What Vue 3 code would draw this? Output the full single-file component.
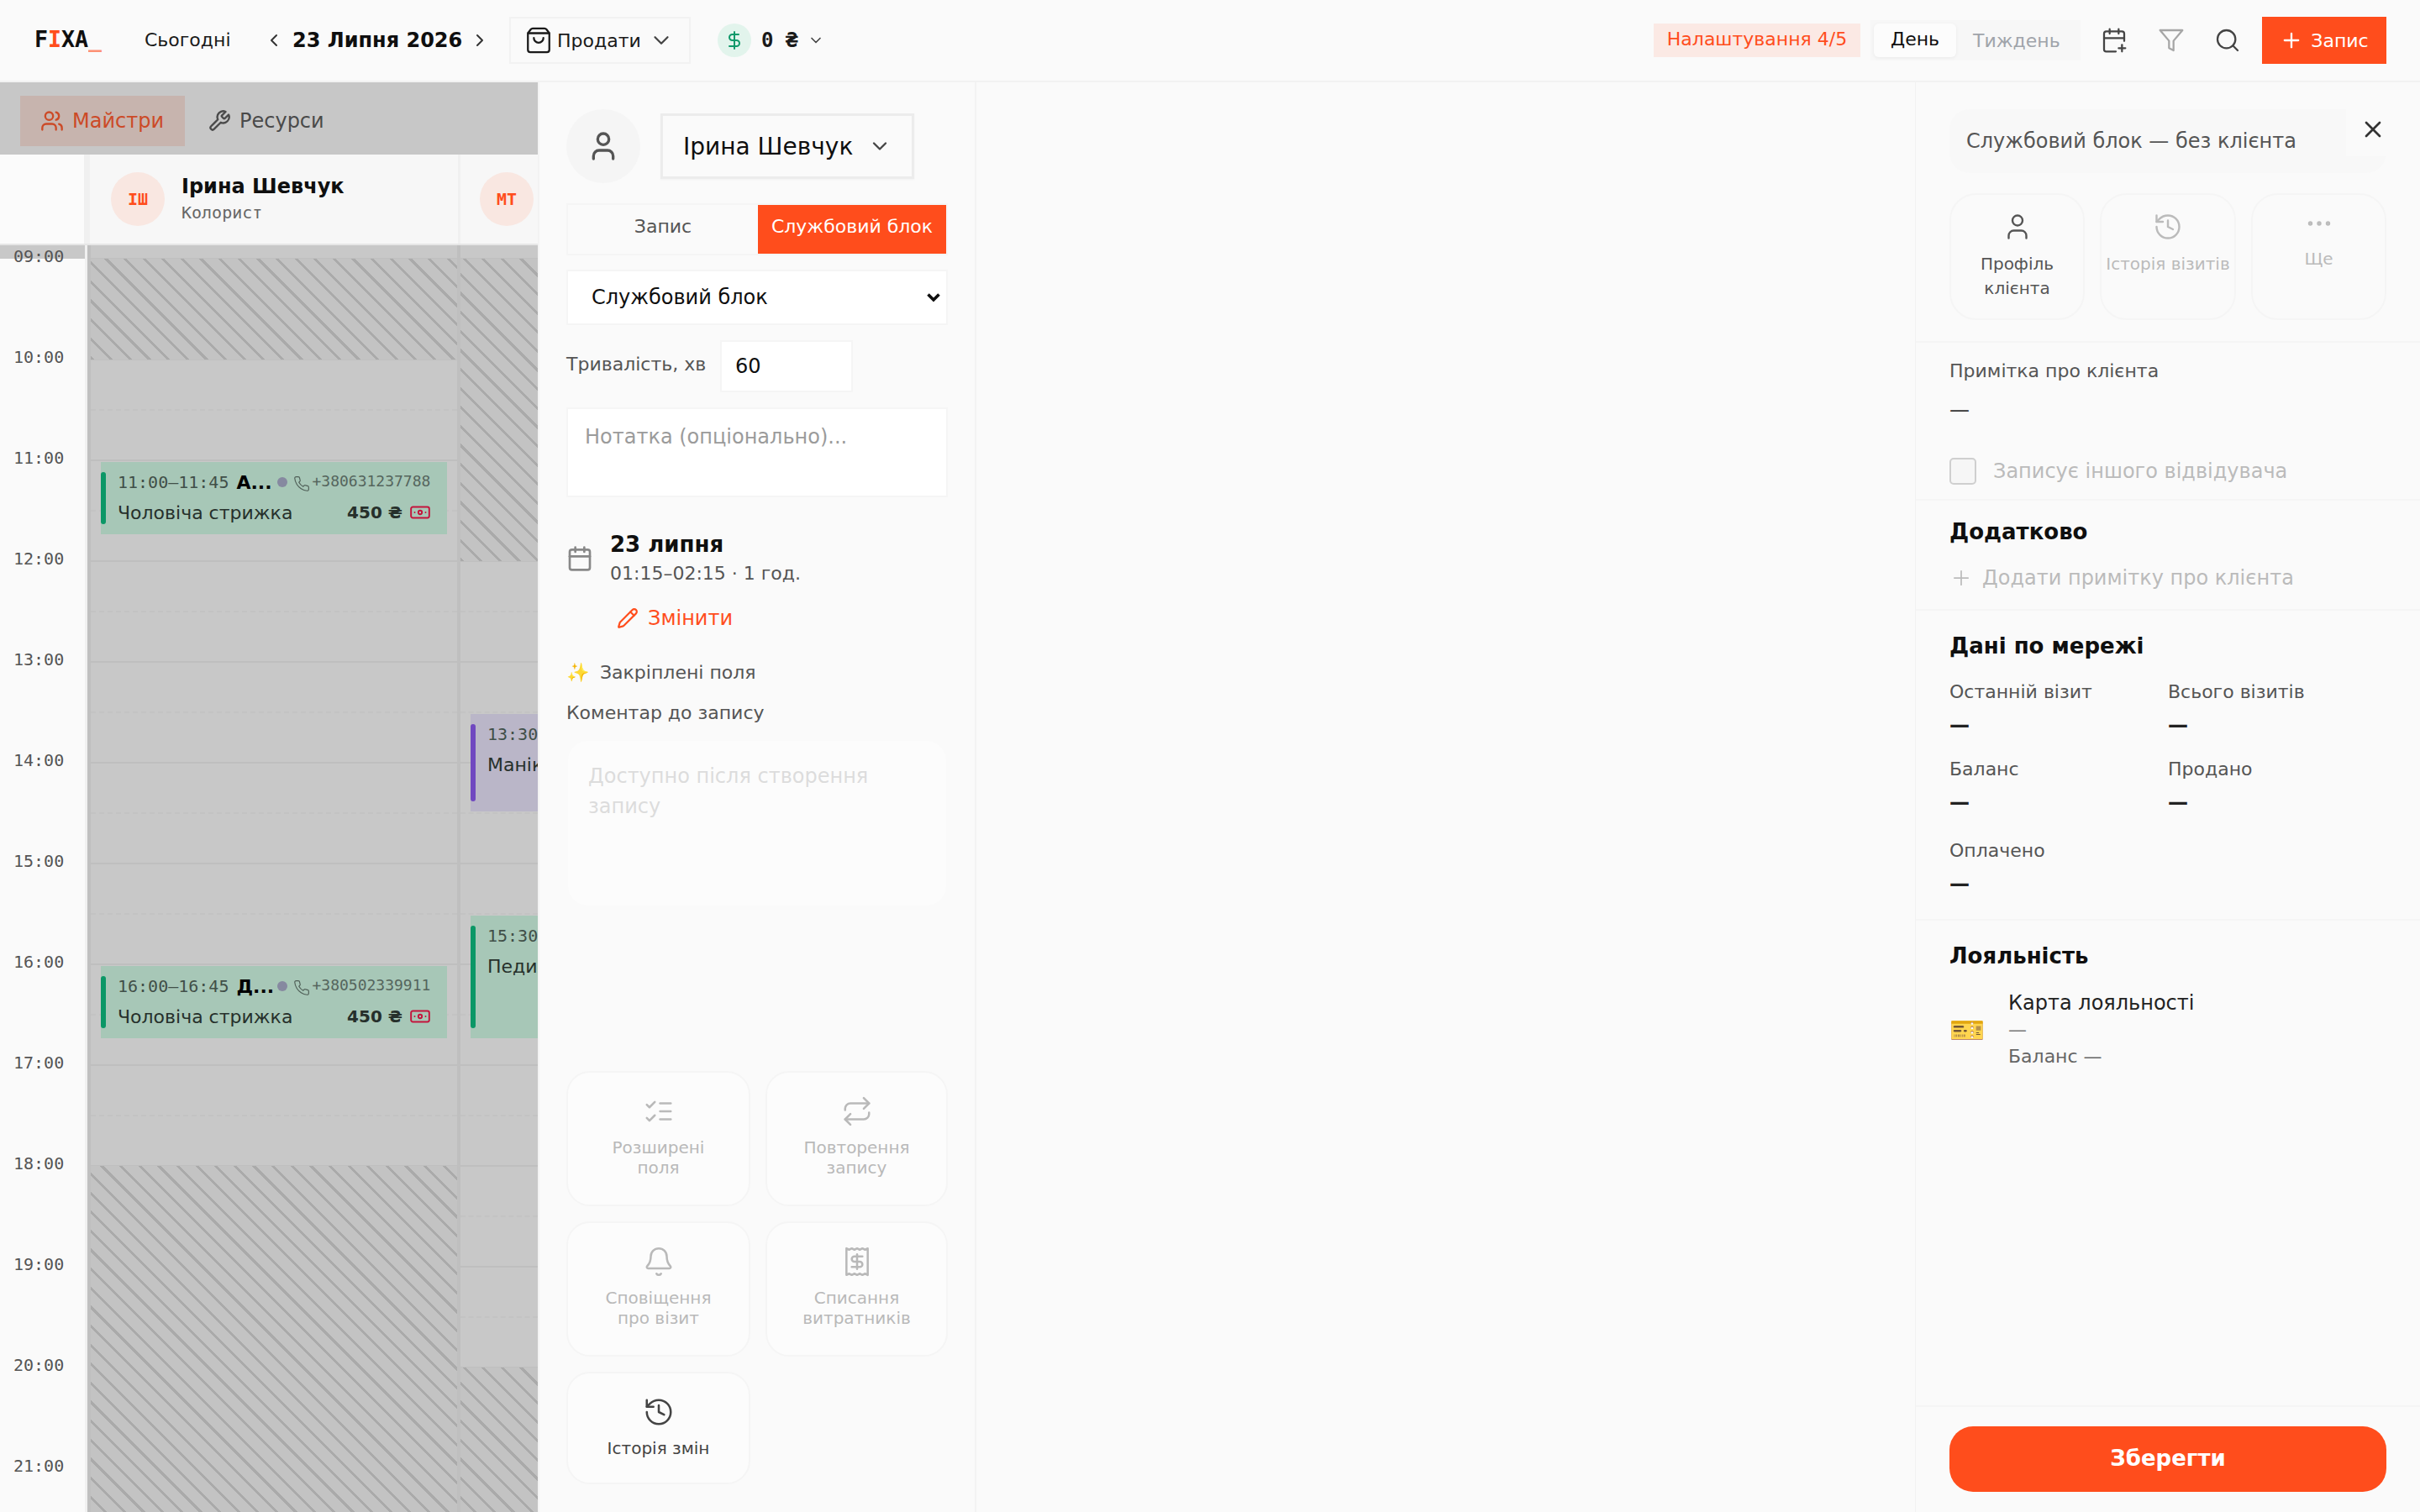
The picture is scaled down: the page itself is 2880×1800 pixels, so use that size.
<script setup>
import { computed } from "vue";

const icons = {
  user: '<path d="M19 21v-2a4 4 0 0 0-4-4H9a4 4 0 0 0-4 4v2"/><circle cx="12" cy="7" r="4"/>',
  users: '<path d="M16 21v-2a4 4 0 0 0-4-4H6a4 4 0 0 0-4 4v2"/><circle cx="9" cy="7" r="4"/><path d="M22 21v-2a4 4 0 0 0-3-3.87"/><path d="M16 3.13a4 4 0 0 1 0 7.75"/>',
  wrench: '<path d="M14.7 6.3a1 1 0 0 0 0 1.4l1.6 1.6a1 1 0 0 0 1.4 0l3.77-3.77a6 6 0 0 1-7.94 7.94l-6.91 6.91a2.12 2.12 0 0 1-3-3l6.91-6.91a6 6 0 0 1 7.94-7.94l-3.76 3.76z"/>',
  bag: '<path d="M16 10a4 4 0 0 1-8 0"/><path d="M3.1 6h17.8"/><path d="M3.4 5.47a2 2 0 0 0-.4 1.2V20a2 2 0 0 0 2 2h14a2 2 0 0 0 2-2V6.67a2 2 0 0 0-.4-1.2l-2-2.67A2 2 0 0 0 17 2H7a2 2 0 0 0-1.6.8z"/>',
  down: '<path d="m6 9 6 6 6-6"/>',
  left: '<path d="m15 18-6-6 6-6"/>',
  right: '<path d="m9 18 6-6-6-6"/>',
  dollar: '<line x1="12" x2="12" y1="2" y2="22"/><path d="M17 5H9.5a3.5 3.5 0 0 0 0 7h5a3.5 3.5 0 0 1 0 7H6"/>',
  calPlus: '<path d="M16 19h6"/><path d="M16 2v4"/><path d="M19 16v6"/><path d="M21 12.6V6a2 2 0 0 0-2-2H5a2 2 0 0 0-2 2v14a2 2 0 0 0 2 2h8.5"/><path d="M3 10h18"/><path d="M8 2v4"/>',
  funnel: '<polygon points="22 3 2 3 10 12.46 10 19 14 21 14 12.46 22 3"/>',
  search: '<circle cx="11" cy="11" r="8"/><path d="m21 21-4.3-4.3"/>',
  plus: '<path d="M5 12h14"/><path d="M12 5v14"/>',
  x: '<path d="M18 6 6 18"/><path d="m6 6 12 12"/>',
  history: '<path d="M3 12a9 9 0 1 0 9-9 9.75 9.75 0 0 0-6.74 2.74L3 8"/><path d="M3 3v5h5"/><path d="M12 7v5l4 2"/>',
  dots: '<circle cx="5" cy="12" r="1"/><circle cx="12" cy="12" r="1"/><circle cx="19" cy="12" r="1"/>',
  calendar: '<path d="M8 2v4"/><path d="M16 2v4"/><rect width="18" height="18" x="3" y="4" rx="2"/><path d="M3 10h18"/>',
  pencil: '<path d="M21.17 6.81a1 1 0 0 0-3.98-3.98L3.84 16.17a2 2 0 0 0-.5.83l-1.32 4.35a.5.5 0 0 0 .62.62l4.35-1.32a2 2 0 0 0 .83-.5z"/><path d="m15 5 4 4"/>',
  checks: '<path d="m3 7 2 2 4-4"/><path d="m3 17 2 2 4-4"/><path d="M13 6h8"/><path d="M13 12h8"/><path d="M13 18h8"/>',
  repeat: '<path d="m17 2 4 4-4 4"/><path d="M3 11v-1a4 4 0 0 1 4-4h14"/><path d="m7 22-4-4 4-4"/><path d="M21 13v1a4 4 0 0 1-4 4H3"/>',
  bell: '<path d="M10.27 21a2 2 0 0 0 3.46 0"/><path d="M3.26 15.33A1 1 0 0 0 4 17h16a1 1 0 0 0 .74-1.67C19.41 13.96 18 12.5 18 8A6 6 0 0 0 6 8c0 4.5-1.41 5.96-2.74 7.33"/>',
  receipt: '<path d="M4 2v20l2-1 2 1 2-1 2 1 2-1 2 1 2-1 2 1V2l-2 1-2-1-2 1-2-1-2 1-2-1-2 1Z"/><path d="M16 8h-6a2 2 0 1 0 0 4h4a2 2 0 1 1 0 4H8"/><path d="M12 17.5v-11"/>',
  phone: '<path d="M22 16.92v3a2 2 0 0 1-2.18 2 19.79 19.79 0 0 1-8.63-3.07 19.5 19.5 0 0 1-6-6 19.79 19.79 0 0 1-3.07-8.67A2 2 0 0 1 4.11 2h3a2 2 0 0 1 2 1.72 12.84 12.84 0 0 0 .7 2.81 2 2 0 0 1-.45 2.11L8.09 9.91a16 16 0 0 0 6 6l1.27-1.27a2 2 0 0 1 2.11-.45 12.84 12.84 0 0 0 2.81.7A2 2 0 0 1 22 16.92z"/>',
  cash: '<rect width="20" height="12" x="2" y="6" rx="2"/><circle cx="12" cy="12" r="2"/><path d="M6 12h.01M18 12h.01"/>',
};

const hourPx = 120;
const startHour = 9;
const topOffset = 16;

const hours = computed(() => {
  const out = [];
  for (let h = startHour; h <= 21; h++) out.push(String(h).padStart(2, "0") + ":00");
  return out;
});

const columns = [
  {
    hatch: [[9, 10], [18, 23]],
    events: [
      { from: 11, to: 11.75, time: "11:00–11:45", name: "А...", phone: "+380631237788", service: "Чоловіча стрижка", price: "450 ₴", tone: "green" },
      { from: 16, to: 16.75, time: "16:00–16:45", name: "Д...", phone: "+380502339911", service: "Чоловіча стрижка", price: "450 ₴", tone: "green" },
    ],
  },
  {
    hatch: [[9, 12], [20, 23]],
    events: [
      { from: 13.5, to: 14.5, time: "13:30", service: "Манікюр", tone: "violet" },
      { from: 15.5, to: 16.75, time: "15:30", service: "Педикюр", tone: "green" },
    ],
  },
];

function pos(from, to, inset) {
  return {
    top: (from - startHour) * hourPx + topOffset + inset + "px",
    height: (to - from) * hourPx - inset * 2 + "px",
  };
}

const extras = [
  { icon: "checks", lines: ["Розширені", "поля"], off: true },
  { icon: "repeat", lines: ["Повторення", "запису"], off: true },
  { icon: "bell", lines: ["Сповіщення", "про візит"], off: true },
  { icon: "receipt", lines: ["Списання", "витратників"], off: true },
  { icon: "history", lines: ["Історія змін"], off: false },
];

const stats = ["Останній візит", "Всього візитів", "Баланс", "Продано", "Оплачено"];
</script>

<template>
  <div class="app">
    <header class="topbar">
      <div class="logo">F<span class="logo-i">I</span>XA<span class="logo-u">_</span></div>
      <span class="today">Сьогодні</span>
      <svg class="ico nav-l" viewBox="0 0 24 24" v-html="icons.left"></svg>
      <span class="date">23 Липня 2026</span>
      <svg class="ico nav-r" viewBox="0 0 24 24" v-html="icons.right"></svg>
      <button class="sell">
        <svg class="ico bag" viewBox="0 0 24 24" v-html="icons.bag"></svg>
        <span>Продати</span>
        <svg class="ico sell-chev" viewBox="0 0 24 24" v-html="icons.down"></svg>
      </button>
      <div class="money">
        <span class="money-dot"><svg class="ico" viewBox="0 0 24 24" v-html="icons.dollar"></svg></span>
        <span class="money-val">0 ₴</span>
        <svg class="ico money-chev" viewBox="0 0 24 24" v-html="icons.down"></svg>
      </div>

      <div class="top-right">
        <span class="setup">Налаштування 4/5</span>
        <div class="seg">
          <span class="seg-on">День</span>
          <span class="seg-off">Тиждень</span>
        </div>
        <svg class="ico tool t-cal" viewBox="0 0 24 24" v-html="icons.calPlus"></svg>
        <svg class="ico tool t-fun" viewBox="0 0 24 24" v-html="icons.funnel"></svg>
        <svg class="ico tool t-sea" viewBox="0 0 24 24" v-html="icons.search"></svg>
        <button class="add">
          <svg class="ico" viewBox="0 0 24 24" v-html="icons.plus"></svg>
          <span>Запис</span>
        </button>
      </div>
    </header>

    <main class="body">
      <section class="calendar">
        <div class="cal-tabs">
          <div class="cal-tab on">
            <svg class="ico" viewBox="0 0 24 24" v-html="icons.users"></svg>
            <span>Майстри</span>
          </div>
          <div class="cal-tab">
            <svg class="ico" viewBox="0 0 24 24" v-html="icons.wrench"></svg>
            <span>Ресурси</span>
          </div>
        </div>

        <div class="staff-row">
          <div class="staff-gap"></div>
          <div class="staff first">
            <span class="avatar">ІШ</span>
            <div>
              <div class="staff-name">Ірина Шевчук</div>
              <div class="staff-role">Колорист</div>
            </div>
          </div>
          <div class="staff second">
            <span class="avatar">МТ</span>
          </div>
        </div>

        <div class="cal-grid">
          <div class="day-strip"></div>
          <div class="time-col">
            <div v-for="h in hours" :key="h" class="time-slot">{{ h }}</div>
          </div>
          <div class="time-edge"></div>
          <div v-for="(col, i) in columns" :key="i" class="col" :class="i === 0 ? 'col-a' : 'col-b'">
            <div class="col-top"></div>
            <template v-for="h in hours" :key="h">
              <div class="slot hour"></div>
              <div class="slot half"></div>
            </template>
            <div v-for="(o, k) in col.hatch" :key="k" class="hatch" :style="pos(o[0], o[1], 0)"></div>
            <article v-for="ev in col.events" :key="ev.time" class="event" :class="ev.tone" :style="pos(ev.from, ev.to, 2)">
              <i class="ev-bar"></i>
              <div class="ev-line">
                <span class="ev-time">{{ ev.time }}</span>
                <b v-if="ev.name" class="ev-name">{{ ev.name }}</b>
                <i v-if="ev.name" class="ev-dot"></i>
                <svg v-if="ev.phone" class="ico ev-phone" viewBox="0 0 24 24" v-html="icons.phone"></svg>
                <span v-if="ev.phone" class="ev-tel">{{ ev.phone }}</span>
              </div>
              <div class="ev-line two">
                <span class="ev-service">{{ ev.service }}</span>
                <b v-if="ev.price" class="ev-price">{{ ev.price }}</b>
                <svg v-if="ev.price" class="ico ev-cash" viewBox="0 0 24 24" v-html="icons.cash"></svg>
              </div>
            </article>
          </div>
        </div>
      </section>

      <section class="form-panel">
        <div class="who">
          <span class="who-avatar"><svg class="ico" viewBox="0 0 24 24" v-html="icons.user"></svg></span>
          <button class="who-select">
            <span>Ірина Шевчук</span>
            <svg class="ico" viewBox="0 0 24 24" v-html="icons.down"></svg>
          </button>
        </div>

        <div class="mode">
          <span class="mode-item">Запис</span>
          <span class="mode-item on">Службовий блок</span>
        </div>

        <div class="type-wrap">
          <select class="block-type">
            <option>Службовий блок</option>
          </select>
          <svg class="type-chev" viewBox="0 0 18 12"><path d="M2.5 2.5 9 9l6.5-6.5" /></svg>
        </div>

        <div class="duration">
          <label>Тривалість, хв</label>
          <input type="text" value="60" />
        </div>

        <textarea class="note" placeholder="Нотатка (опціонально)..."></textarea>

        <div class="when">
          <svg class="ico" viewBox="0 0 24 24" v-html="icons.calendar"></svg>
          <div>
            <div class="when-date">23 липня</div>
            <div class="when-time">01:15–02:15 · 1 год.</div>
          </div>
        </div>

        <div class="change">
          <svg class="ico" viewBox="0 0 24 24" v-html="icons.pencil"></svg>
          <span>Змінити</span>
        </div>

        <div class="pinned"><span class="spark">✨</span><span>Закріплені поля</span></div>
        <div class="comment-label">Коментар до запису</div>
        <textarea class="comment" disabled placeholder="Доступно після створення запису"></textarea>

        <div class="extras">
          <div v-for="e in extras" :key="e.icon" class="extra" :class="{ muted: e.off }">
            <svg class="ico" viewBox="0 0 24 24" v-html="icons[e.icon]"></svg>
            <div class="extra-text">
              <div v-for="l in e.lines" :key="l">{{ l }}</div>
            </div>
          </div>
        </div>
      </section>

      <div class="blank"></div>

      <aside class="client">
        <div class="client-scroll">
          <div class="client-head">
            <div class="client-title">Службовий блок — без клієнта</div>
            <button class="close"><svg class="ico" viewBox="0 0 24 24" v-html="icons.x"></svg></button>
          </div>

          <div class="actions">
            <div class="action">
              <svg class="ico" viewBox="0 0 24 24" v-html="icons.user"></svg>
              <span>Профіль клієнта</span>
            </div>
            <div class="action muted">
              <svg class="ico" viewBox="0 0 24 24" v-html="icons.history"></svg>
              <span>Історія візитів</span>
            </div>
            <div class="action muted more">
              <svg class="ico" viewBox="0 0 24 24" v-html="icons.dots"></svg>
              <span>Ще</span>
            </div>
          </div>

          <div class="sec sec-note">
            <div class="label">Примітка про клієнта</div>
            <div class="dash-thin">—</div>
            <label class="visitor">
              <i class="box"></i>
              <span>Записує іншого відвідувача</span>
            </label>
          </div>

          <div class="sec sec-extra">
            <h3>Додатково</h3>
            <div class="add-note">
              <svg class="ico" viewBox="0 0 24 24" v-html="icons.plus"></svg>
              <span>Додати примітку про клієнта</span>
            </div>
          </div>

          <div class="sec sec-net">
            <h3>Дані по мережі</h3>
            <div class="stats">
              <div v-for="s in stats" :key="s" class="stat">
                <div class="label">{{ s }}</div>
                <div class="dash-bold">—</div>
              </div>
            </div>
          </div>

          <div class="sec sec-loyal">
            <h3>Лояльність</h3>
            <div class="loyal">
              <span class="ticket">🎫</span>
              <div>
                <div class="loyal-name">Карта лояльності</div>
                <div class="loyal-dash">—</div>
                <div class="loyal-bal">Баланс —</div>
              </div>
            </div>
          </div>
        </div>

        <div class="client-foot">
          <button class="save">Зберегти</button>
        </div>
      </aside>
    </main>
  </div>
</template>

<style>
html,
body {
  margin: 0;
  background: #fafafa;
}
</style>

<style scoped>
.app {
  width: 2880px;
  height: 1800px;
  overflow: hidden;
  display: flex;
  flex-direction: column;
  background: #fafafa;
  color: #0f0f0f;
  font-family: "DejaVu Sans", sans-serif;
}
button {
  font-family: inherit;
  padding: 0;
  background: none;
  border: 0;
  color: inherit;
}
.ico {
  width: 24px;
  height: 24px;
  fill: none;
  stroke: currentColor;
  stroke-width: 2;
  stroke-linecap: round;
  stroke-linejoin: round;
  flex: none;
  display: block;
}

/* top bar */
.topbar {
  height: 96px;
  flex: none;
  border-bottom: 2px solid #f2f2f2;
  display: flex;
  align-items: center;
  padding: 0 40px 0 41px;
}
.logo {
  font-family: "DejaVu Sans Mono", monospace;
  font-weight: 700;
  font-size: 26.6px;
  line-height: 30px;
  width: 131px;
  margin-top: -2px;
}
.logo-i {
  color: #ff4d1c;
}
.logo-u {
  color: #ff4d1c;
  opacity: 0.6;
}
.today {
  font-size: 22px;
  width: 142px;
  color: #1a1a1a;
  margin-top: -2px;
}
.nav-l {
  color: #333;
  width: 24px;
  margin-right: 10px;
  height: 24px;
}
.date {
  font-weight: 700;
  font-size: 24px;
  width: 203px;
  white-space: nowrap;
}
.nav-r {
  color: #333;
  margin-left: 8px;
}
.sell {
  margin-left: 23px;
  width: 216px;
  height: 56px;
  border: 2px solid #f2f2f2;
  display: flex;
  align-items: center;
  padding-left: 16px;
  font-size: 22px;
  color: #1a1a1a;
  box-sizing: border-box;
}
.bag {
  width: 34px;
  height: 34px;
  margin-right: 5px;
  stroke-width: 1.6;
}
.sell-chev {
  width: 30px;
  height: 30px;
  margin-left: 9px;
  color: #444;
  stroke-width: 1.8;
}
.money {
  margin-left: 32px;
  display: flex;
  align-items: center;
}
.money-dot {
  width: 40px;
  height: 40px;
  border-radius: 50%;
  background: #e2f4ec;
  color: #10996a;
  display: flex;
  align-items: center;
  justify-content: center;
}
.money-val {
  font-family: "DejaVu Sans Mono", monospace;
  font-weight: 700;
  font-size: 24px;
  margin-left: 12px;
  color: #1a1a1a;
}
.money-chev {
  width: 20px;
  height: 20px;
  margin-left: 12px;
  color: #444;
}
.top-right {
  margin-left: auto;
  display: flex;
  align-items: center;
}
.setup {
  height: 40px;
  line-height: 38px;
  width: 246px;
  text-align: center;
  background: #fbe9e4;
  color: #ff4d1c;
  font-size: 22px;
}
.seg {
  margin-left: 12px;
  width: 250px;
  height: 48px;
  background: #f7f7f7;
  display: flex;
  align-items: center;
  padding: 0 4px;
  box-sizing: border-box;
  font-size: 22px;
}
.seg-on {
  width: 98px;
  height: 40px;
  line-height: 38px;
  text-align: center;
  background: #fcfcfc;
  border-radius: 6px;
  box-shadow: 0 1px 4px rgba(0, 0, 0, 0.06);
}
.seg-off {
  margin-left: 20px;
  color: #a0a4aa;
}
.tool {
  width: 32px;
  height: 32px;
  stroke-width: 1.7;
  color: #444;
}
.t-cal {
  margin-left: 24px;
}
.t-fun {
  margin-left: 36px;
  color: #a6a6a6;
}
.t-sea {
  margin-left: 35px;
}
.add {
  margin-left: 25px;
  width: 148px;
  height: 56px;
  background: #ff4d1c;
  color: #fff;
  font-size: 22px;
  display: flex;
  align-items: center;
  justify-content: center;
  gap: 9px;
}
.add .ico {
  width: 28px;
  height: 28px;
}

.body {
  flex: 1;
  display: flex;
  min-height: 0;
}

/* calendar */
.calendar {
  width: 640px;
  flex: none;
  display: flex;
  flex-direction: column;
  overflow: hidden;
}
.cal-tabs {
  height: 86px;
  flex: none;
  background: #c7c7c7;
  padding: 16px 24px 0;
  box-sizing: border-box;
  display: flex;
  gap: 27px;
}
.cal-tab {
  height: 60px;
  display: flex;
  align-items: center;
  gap: 10px;
  font-size: 24px;
  color: #4a4a4a;
}
.cal-tab .ico {
  width: 28px;
  height: 28px;
}
.cal-tab.on {
  width: 196px;
  background: #c7b4ae;
  color: #cc4a27;
  padding-left: 24px;
  box-sizing: border-box;
}
.staff-row {
  height: 108px;
  flex: none;
  box-sizing: border-box;
  display: flex;
  background: #f7f7f7;
  border-bottom: 2px solid #e6e6e6;
}
.staff-gap {
  width: 107px;
  box-sizing: border-box;
  background: #fbfbfb;
  border-right: 7px solid #f0f0f0;
  flex: none;
}
.staff {
  display: flex;
  align-items: center;
  height: 106px;
  box-sizing: border-box;
}
.staff.first {
  width: 441px;
  flex: none;
  padding-left: 25px;
  border-right: 3px solid #f0f0f0;
  gap: 20px;
}
.staff.second {
  padding-left: 23px;
  flex: 1;
}
.avatar {
  width: 64px;
  height: 64px;
  flex: none;
  border-radius: 50%;
  background: #f9e7e1;
  color: #ff4d1c;
  font-family: "DejaVu Sans Mono", monospace;
  font-weight: 700;
  font-size: 20px;
  line-height: 64px;
  text-align: center;
}
.staff-name {
  font-weight: 700;
  font-size: 24px;
  line-height: 30px;
}
.staff-role {
  font-family: "DejaVu Sans Mono", monospace;
  font-size: 20px;
  line-height: 28px;
  margin-top: 2px;
  color: #666;
}
.cal-grid {
  position: relative;
  flex: 1;
  min-height: 0;
  display: flex;
  overflow: hidden;
}
.day-strip {
  position: absolute;
  top: 0;
  left: 0;
  right: 0;
  height: 16px;
  background: #c8c8c8;
}
.time-col {
  width: 101px;
  flex: none;
  position: relative;
}
.time-slot {
  height: 120px;
  padding-left: 16px;
  position: relative;
  font-family: "DejaVu Sans Mono", monospace;
  font-size: 20px;
  line-height: 26px;
  color: #555;
}
.time-edge {
  width: 3px;
  flex: none;
  background: #f0f0f0;
  position: relative;
}
.col {
  position: relative;
  flex: none;
  box-sizing: border-box;
  border-left: 4px solid #bfbfbf;
  background: #c8c8c8;
  overflow: hidden;
}
.col-a {
  width: 440px;
}
.col-b {
  width: 96px;
}
.col-top {
  height: 15px;
}
.slot {
  height: 60px;
  box-sizing: border-box;
}
.hour {
  border-top: 2px solid #bfbfbf;
}
.half {
  border-top: 2px dashed #c3c3c3;
}
.hatch {
  position: absolute;
  left: 0;
  right: 0;
  background: repeating-linear-gradient(45deg, #aaaaaa 0 3px, #c3c3c3 3px 16px);
}
.event {
  position: absolute;
  left: 12px;
  width: 412px;
  padding: 11px 0 0 20px;
  box-sizing: border-box;
  overflow: hidden;
}
.event.green {
  background: #a7c7b7;
}
.event.violet {
  background: #bab6c8;
}
.ev-bar {
  position: absolute;
  left: 0;
  top: 12px;
  bottom: 12px;
  width: 6px;
  border-radius: 3px;
}
.green .ev-bar {
  background: #0b9766;
}
.violet .ev-bar {
  background: #7048c0;
}
.ev-line {
  display: flex;
  align-items: center;
  height: 26px;
  white-space: nowrap;
}
.ev-line.two {
  margin-top: 10px;
}
.ev-time {
  font-family: "DejaVu Sans Mono", monospace;
  font-size: 20px;
  color: #414f48;
}
.ev-name {
  font-size: 22px;
  margin-left: 9px;
  width: 40px;
  color: #000;
}
.ev-dot {
  width: 12px;
  height: 12px;
  border-radius: 50%;
  background: #8689a0;
  margin-left: 9px;
}
.ev-phone {
  width: 20px;
  height: 20px;
  stroke-width: 1.4;
  margin-left: 7px;
  color: #4f5f57;
  margin-top: 4px;
}
.ev-tel {
  font-family: "DejaVu Sans Mono", monospace;
  font-size: 18px;
  color: #55655d;
  margin-left: 2px;
  margin-top: -3px;
}
.ev-service {
  font-size: 22px;
  color: #26302b;
}
.ev-price {
  font-size: 20px;
  margin-left: auto;
  color: #26302b;
}
.ev-cash {
  width: 26px;
  height: 26px;
  margin-left: 8px;
  margin-right: 19px;
  color: #c4143c;
  stroke-width: 1.8;
}

/* form panel */
.form-panel {
  width: 522px;
  flex: none;
  box-sizing: border-box;
  border-left: 2px solid #f3f3f3;
  border-right: 2px solid #f3f3f3;
  padding: 32px 32px 33px 32px;
  display: flex;
  flex-direction: column;
}
.who {
  display: flex;
  align-items: center;
  gap: 24px;
}
.who-avatar {
  width: 88px;
  height: 88px;
  border-radius: 50%;
  background: #f5f5f5;
  display: flex;
  align-items: center;
  justify-content: center;
  color: #555;
}
.who-avatar .ico {
  width: 40px;
  height: 40px;
}
.who-select {
  width: 302px;
  height: 78px;
  box-sizing: border-box;
  border: 3px solid #ececec;
  display: flex;
  align-items: center;
  padding-left: 24px;
  font-size: 28px;
  box-shadow: 0 1px 2px rgba(0, 0, 0, 0.04);
}
.who-select .ico {
  width: 28px;
  height: 28px;
  margin-left: 18px;
  color: #444;
}
.mode {
  margin-top: 24px;
  height: 62px;
  flex: none;
  box-sizing: border-box;
  border: 2px solid #f5f5f5;
  display: flex;
  font-size: 22px;
}
.mode-item {
  width: 226px;
  line-height: 52px;
  text-align: center;
  color: #555;
}
.mode-item.on {
  width: 224px;
  background: #ff4d1c;
  color: #fff;
}
.type-wrap {
  margin-top: 17px;
  position: relative;
  flex: none;
}
.block-type {
  appearance: none;
  display: block;
  height: 66px;
  width: 100%;
  box-sizing: border-box;
  border: 2px solid #f5f5f5;
  background: #fff;
  border-radius: 0;
  padding: 0 0 0 28px;
  font-family: inherit;
  font-size: 24px;
  color: #0f0f0f;
}
.type-chev {
  position: absolute;
  right: 8px;
  top: 27px;
  width: 18px;
  height: 12px;
  fill: none;
  stroke: #0f0f0f;
  stroke-width: 3.6;
}
.duration {
  margin-top: 18px;
  display: flex;
  align-items: center;
  font-size: 22px;
  color: #555;
}
.duration label {
  width: 183px;
  margin-top: -6px;
}
.duration input {
  width: 158px;
  height: 62px;
  box-sizing: border-box;
  border: 2px solid #f5f5f5;
  background: #fff;
  padding: 0 0 0 16px;
  font-family: inherit;
  font-size: 24px;
  color: #0f0f0f;
  outline: none;
}
.note {
  margin-top: 18px;
  height: 107px;
  flex: none;
  box-sizing: border-box;
  border: 2px solid #f5f5f5;
  background: #fff;
  padding: 19px 20px;
  font-family: inherit;
  font-size: 24px;
  resize: none;
  outline: none;
}
.note::placeholder {
  color: #9b9b9b;
}
.when {
  margin-top: 38px;
  display: flex;
  align-items: center;
  gap: 20px;
}
.when .ico {
  width: 32px;
  height: 32px;
  color: #888;
}
.when-date {
  font-weight: 700;
  font-size: 26px;
  line-height: 36px;
}
.when-time {
  font-size: 22px;
  line-height: 34px;
  color: #555;
}
.change {
  margin-top: 19px;
  margin-left: 60px;
  display: flex;
  align-items: center;
  gap: 11px;
  color: #ff4d1c;
  font-size: 24px;
  line-height: 34px;
}
.change .ico {
  width: 26px;
  height: 26px;
}
.pinned {
  margin-top: 31px;
  display: flex;
  align-items: center;
  gap: 13px;
  font-size: 22px;
  line-height: 34px;
  color: #555;
}
.spark {
  font-size: 22px;
}
.comment-label {
  margin-top: 14px;
  font-size: 22px;
  line-height: 34px;
  color: #555;
}
.comment {
  margin: 16px 2px 0;
  height: 196px;
  flex: none;
  box-sizing: border-box;
  border: 0;
  border-radius: 24px;
  background: #fcfcfc;
  padding: 24px;
  font-family: inherit;
  font-size: 24px;
  line-height: 36px;
  resize: none;
}
.comment::placeholder {
  color: #dcdcdc;
}
.extras {
  margin-top: auto;
  display: grid;
  grid-template-columns: 219px 217px;
  gap: 18px;
}
.extra {
  height: 161px;
  box-sizing: border-box;
  border: 2px solid #f5f5f5;
  border-radius: 28px;
  background: #fcfcfc;
  display: flex;
  flex-direction: column;
  align-items: center;
  padding-top: 27px;
  color: #444;
  font-size: 20px;
  line-height: 24px;
  text-align: center;
}
.extra:last-child {
  height: 134px;
}
.extra.muted {
  color: #b9b9b9;
}
.extra .ico {
  width: 38px;
  height: 38px;
  stroke-width: 1.6;
}
.extra-text {
  margin-top: 12px;
}

.blank {
  flex: 1;
}

/* client panel */
.client {
  width: 601px;
  flex: none;
  box-sizing: border-box;
  border-left: 1px solid #f2f2f2;
  display: flex;
  flex-direction: column;
}
.client-scroll {
  flex: 1;
  min-height: 0;
  overflow: hidden;
}
.client-head {
  position: relative;
  margin: 32px 40px 0;
  height: 76px;
}
.client-title {
  height: 76px;
  box-sizing: border-box;
  border-radius: 24px;
  background: #f8f8f8;
  padding-left: 20px;
  font-size: 24px;
  line-height: 76px;
  color: #555;
}
.close {
  position: absolute;
  top: 0;
  right: 0;
  width: 48px;
  height: 56px;
  background: #fafafa;
  display: flex;
  align-items: center;
  justify-content: flex-end;
  padding-bottom: 8px;
  box-sizing: border-box;
}
.close .ico {
  width: 32px;
  height: 32px;
  color: #333;
}
.actions {
  margin: 24px 40px 0;
  display: grid;
  grid-template-columns: 161px 162px 161px;
  gap: 18px;
}
.action {
  height: 151px;
  box-sizing: border-box;
  border: 2px solid #f5f5f5;
  border-radius: 32px;
  display: flex;
  flex-direction: column;
  align-items: center;
  padding-top: 20px;
  color: #555;
  font-size: 20px;
  line-height: 29px;
  text-align: center;
}
.action.muted {
  color: #bbb;
}
.action .ico {
  width: 36px;
  height: 36px;
  stroke-width: 1.6;
  margin-bottom: 12px;
}
.action span {
  padding: 0 6px;
}
.action.muted span {
  padding: 0;
  white-space: nowrap;
}
.action.more .ico {
  margin-top: -4px;
  margin-bottom: 10px;
}
.sec {
  border-top: 2px solid #f5f5f5;
  padding: 0 40px;
  box-sizing: border-box;
}
.sec-note {
  margin-top: 25px;
  height: 188px;
  padding-top: 19px;
}
.label {
  font-size: 22px;
  line-height: 30px;
  color: #555;
}
.dash-thin {
  font-size: 24px;
  line-height: 30px;
  margin-top: 16px;
  color: #333;
}
.visitor {
  margin-top: 42px;
  display: flex;
  align-items: center;
  gap: 20px;
  color: #bbb;
  font-size: 24px;
  line-height: 32px;
}
.box {
  width: 32px;
  height: 32px;
  box-sizing: border-box;
  border: 2px solid #cfcfcf;
  border-radius: 5px;
  background: #f6f6f6;
  flex: none;
}
h3 {
  margin: 0;
  font-size: 26px;
  font-weight: 700;
  line-height: 34px;
}
.sec-extra {
  height: 131px;
  padding-top: 20px;
}
.add-note {
  margin-top: 21px;
  display: flex;
  align-items: center;
  gap: 11px;
  color: #bbb;
  font-size: 24px;
  line-height: 34px;
}
.add-note .ico {
  width: 28px;
  height: 28px;
  stroke-width: 1.5;
}
.sec-net {
  height: 369px;
  padding-top: 25px;
}
.stats {
  display: grid;
  grid-template-columns: 260px 1fr;
  margin-top: 21px;
  grid-auto-rows: 92px;
}
.stat:last-child {
  margin-top: 5px;
}
.stat .label {
  line-height: 34px;
}
.dash-bold {
  font-size: 24px;
  font-weight: 700;
  line-height: 30px;
  margin-top: 7px;
  color: #222;
}
.sec-loyal {
  padding-top: 25px;
}
.loyal {
  margin-top: 22px;
  display: flex;
  align-items: center;
  gap: 28px;
}
.ticket {
  font-size: 34px;
  width: 42px;
  text-align: center;
}
.loyal-name {
  font-size: 24px;
  line-height: 34px;
  color: #222;
}
.loyal-dash {
  font-size: 22px;
  line-height: 30px;
  color: #777;
}
.loyal-bal {
  font-size: 22px;
  line-height: 34px;
  color: #666;
}
.client-foot {
  flex: none;
  height: 127px;
  box-sizing: border-box;
  border-top: 2px solid #f5f5f5;
  padding: 23px 40px 0;
}
.save {
  width: 520px;
  height: 78px;
  border-radius: 28px;
  background: #ff4d1c;
  color: #fff;
  font-size: 26px;
  font-weight: 700;
  padding-bottom: 2px;
  display: block;
}
</style>
